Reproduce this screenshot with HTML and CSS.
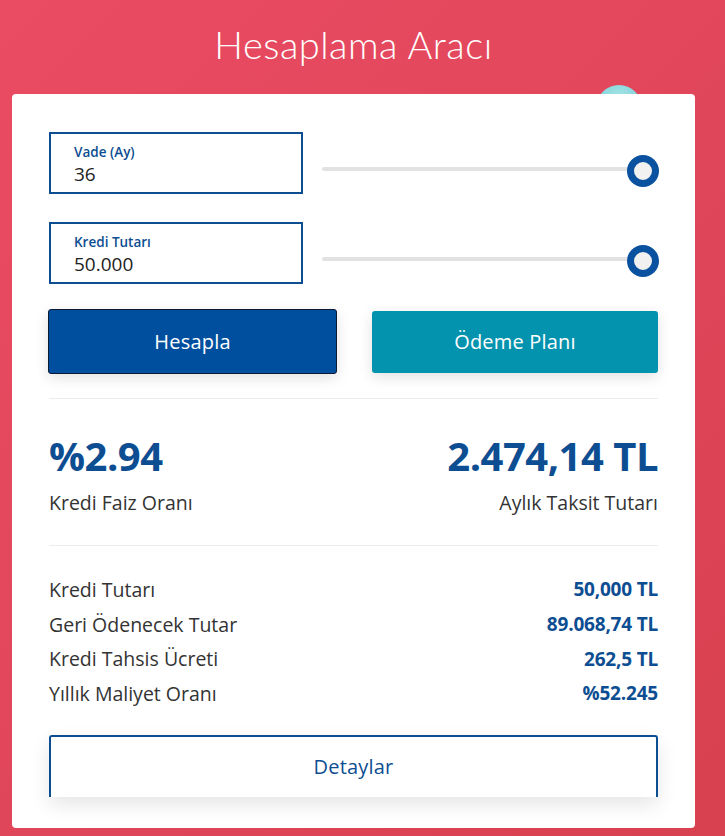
FILE: index.html
```html
<!DOCTYPE html>
<html lang="tr">
<head>
<meta charset="utf-8">
<title>Hesaplama Aracı</title>
<link rel="stylesheet" href="styles.css">
</head>
<body>
<div class="page">
  <div class="bubble"></div>
  <h1 class="title">Hesaplama Aracı</h1>
  <div class="card">
    <div class="field-row">
      <div class="field">
        <div class="field-label">Vade (Ay)</div>
        <div class="field-value">36</div>
      </div>
      <div class="slider">
        <div class="track"></div>
        <div class="thumb"></div>
      </div>
    </div>
    <div class="field-row">
      <div class="field">
        <div class="field-label">Kredi Tutarı</div>
        <div class="field-value">50.000</div>
      </div>
      <div class="slider">
        <div class="track"></div>
        <div class="thumb"></div>
      </div>
    </div>
    <div class="buttons">
      <button class="btn btn-primary">Hesapla</button>
      <button class="btn btn-teal">Ödeme Planı</button>
    </div>
    <hr class="divider">
    <div class="summary">
      <div class="sum-item">
        <div class="sum-value">%2.94</div>
        <div class="sum-label">Kredi Faiz Oranı</div>
      </div>
      <div class="sum-item right">
        <div class="sum-value">2.474,14 TL</div>
        <div class="sum-label">Aylık Taksit Tutarı</div>
      </div>
    </div>
    <hr class="divider">
    <div class="details">
      <div class="row"><span class="row-label">Kredi Tutarı</span><span class="row-value">50,000 TL</span></div>
      <div class="row"><span class="row-label">Geri Ödenecek Tutar</span><span class="row-value">89.068,74 TL</span></div>
      <div class="row"><span class="row-label">Kredi Tahsis Ücreti</span><span class="row-value">262,5 TL</span></div>
      <div class="row"><span class="row-label">Yıllık Maliyet Oranı</span><span class="row-value">%52.245</span></div>
    </div>
    <button class="btn btn-outline">Detaylar</button>
  </div>
</div>
</body>
</html>
```
FILE: styles.css
```css
* { box-sizing: border-box; }
html, body { margin: 0; padding: 0; }
body {
  font-family: "Open Sans", "DejaVu Sans", sans-serif;
  background: linear-gradient(135deg, #ea4c63 0%, #df4559 60%, #d8414f 100%);
  width: 725px;
  height: 836px;
  overflow: hidden;
}
.page {
  position: relative;
  padding: 0 30px 0 12px;
}
.bubble {
  position: absolute;
  left: 596px;
  top: 85px;
  width: 46px;
  height: 46px;
  border-radius: 50%;
  background: radial-gradient(circle at 50% 30%, #a8e4e6, #63c8d3);
}
.title {
  margin: 0;
  height: 94px;
  padding-top: 20px;
  text-align: center;
  color: #fff;
  font-family: Lato, "Open Sans", sans-serif;
  font-weight: 300;
  font-size: 38px;
  line-height: 48px;
  letter-spacing: 0.5px;
}
.card {
  position: relative;
  background: #fff;
  border-radius: 4px;
  width: 683px;
  height: 734px;
  padding: 38px 37px 0 37px;
}
.field-row {
  display: flex;
  align-items: flex-start;
  margin-bottom: 28px;
}
.field {
  width: 254px;
  height: 62px;
  border: 2px solid #0d4e92;
  padding: 9px 0 0 23px;
  flex: none;
}
.field-label {
  color: #0d4e92;
  font-size: 13.5px;
  font-weight: 600;
  line-height: 18px;
}
.field-value {
  color: #222;
  font-size: 19px;
  line-height: 26px;
}
.slider {
  position: relative;
  margin-left: 19px;
  margin-top: 20px;
  flex: 1;
  height: 34px;
  display: flex;
  align-items: center;
}
.track {
  width: 323px;
  height: 4px;
  background: #e2e2e2;
  border-radius: 2px;
}
.thumb {
  position: absolute;
  right: -1px;
  top: 3px;
  width: 32px;
  height: 32px;
  border-radius: 50%;
  border: 7px solid #0a51a0;
  background: #f1f1f1;
}
.buttons {
  display: flex;
  justify-content: space-between;
  align-items: center;
  margin-top: -3px;
}
.btn {
  font-family: "Open Sans", "DejaVu Sans", sans-serif;
  font-size: 20px;
  letter-spacing: 0.2px;
  cursor: pointer;
  border-radius: 3px;
}
.btn-primary {
  width: 289px;
  height: 65px;
  background: #004f9e;
  color: #fff;
  border: 1.5px solid #0c1a33;
  margin-left: -1px;
  box-shadow: 0 4px 14px rgba(0,0,0,0.12);
}
.btn-teal {
  width: 286px;
  height: 62px;
  background: #0393ae;
  color: #fff;
  border: none;
  box-shadow: 0 4px 14px rgba(0,0,0,0.12);
}
.divider {
  border: none;
  border-top: 1px solid #ececec;
  margin: 24px 0 0 0;
}
.summary {
  display: flex;
  justify-content: space-between;
  padding-top: 32px;
  height: 146px;
  margin-bottom: -24px;
}
.sum-item.right { text-align: right; }
.sum-value {
  color: #0d4e92;
  font-size: 40px;
  font-weight: 700;
  line-height: 50px;
  letter-spacing: -0.5px;
}
.sum-label {
  color: #333;
  font-size: 19.5px;
  line-height: 26px;
  margin-top: 9px;
}
.details {
  padding-top: 26px;
  display: flex;
  flex-direction: column;
}
.row {
  display: flex;
  justify-content: space-between;
  align-items: center;
  height: 34.7px;
}
.row-label {
  color: #333;
  font-size: 19.5px;
}
.row-value {
  color: #0d4e92;
  font-size: 19px;
  font-weight: 700;
  letter-spacing: -0.2px;
}
.btn-outline {
  display: block;
  width: 609px;
  height: 62px;
  margin-top: 24px;
  background: #fff;
  color: #0d4e92;
  border: 2px solid #0d4e92;
  border-bottom: none;
  border-radius: 3px 3px 0 0;
  box-shadow: 0 8px 20px rgba(0,0,0,0.10);
}
```
